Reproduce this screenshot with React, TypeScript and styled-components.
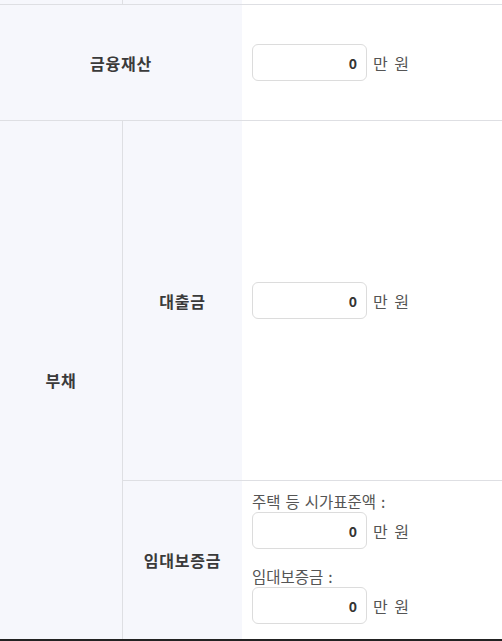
import React from 'react';
import styled, { createGlobalStyle } from 'styled-components';

const GlobalStyle = createGlobalStyle`
  html, body {
    margin: 0;
    padding: 0;
    background: #fff;
    font-family: "Noto Sans CJK KR", "Noto Sans", sans-serif;
  }
  * {
    box-sizing: border-box;
  }
`;

const Table = styled.table`
  width: 502px;
  border-collapse: separate;
  border-spacing: 0;
  table-layout: fixed;
  border-bottom: 2px solid #222;
`;

const Row = styled.tr<{ height: number }>`
  height: ${props => props.height}px;
`;

const Label = styled.th<{ divider?: boolean; last?: boolean }>`
  background: #f6f7fc;
  color: #3a3a3a;
  font-size: 16px;
  font-weight: 700;
  letter-spacing: 0.8px;
  text-align: center;
  vertical-align: middle;
  padding: 0;
  border-bottom: ${props => (props.last ? 'none' : '1px solid #dedfe3')};
  border-right: ${props => (props.divider ? '1px solid #dedfe3' : 'none')};
`;

const Value = styled.td<{ last?: boolean }>`
  background: #fff;
  vertical-align: middle;
  padding: 0 0 0 10px;
  border-bottom: ${props => (props.last ? 'none' : '1px solid #dedfe3')};
`;

const Field = styled.div`
  display: flex;
  align-items: center;
  gap: 6px;
`;

const Amount = styled.input`
  width: 115px;
  height: 37px;
  border: 1px solid #dcdcdc;
  border-radius: 6px;
  padding: 0 9px;
  text-align: right;
  font-family: "Noto Sans CJK KR", "Noto Sans", sans-serif;
  font-size: 14px;
  font-weight: 700;
  color: #333;
  background: #fff;
  outline: none;
`;

const Unit = styled.span`
  font-size: 16px;
  color: #555;
  word-spacing: 3px;
`;

const Stack = styled.div`
  display: flex;
  flex-direction: column;
  gap: 16px;
  padding-bottom: 6px;
`;

const Group = styled.div`
  display: flex;
  flex-direction: column;
`;

const Caption = styled.div`
  font-size: 15.5px;
  line-height: 22px;
  color: #555;
  word-spacing: 1.5px;
`;

const MoneyField: React.FC = () => (
  <Field>
    <Amount defaultValue="0" />
    <Unit>만 원</Unit>
  </Field>
);

export default function App() {
  return (
    <>
      <GlobalStyle />
      <Table>
        <colgroup>
          <col style={{ width: 123 }} />
          <col style={{ width: 119 }} />
          <col style={{ width: 260 }} />
        </colgroup>
        <tbody>
          <Row height={5}>
            <Label divider />
            <Label />
            <Value />
          </Row>
          <Row height={116}>
            <Label colSpan={2}>금융재산</Label>
            <Value>
              <MoneyField />
            </Value>
          </Row>
          <Row height={360}>
            <Label rowSpan={2} divider last>
              부채
            </Label>
            <Label>대출금</Label>
            <Value>
              <MoneyField />
            </Value>
          </Row>
          <Row height={158}>
            <Label last>임대보증금</Label>
            <Value last>
              <Stack>
                <Group>
                  <Caption>주택 등 시가표준액 :</Caption>
                  <MoneyField />
                </Group>
                <Group>
                  <Caption>임대보증금 :</Caption>
                  <MoneyField />
                </Group>
              </Stack>
            </Value>
          </Row>
        </tbody>
      </Table>
    </>
  );
}
